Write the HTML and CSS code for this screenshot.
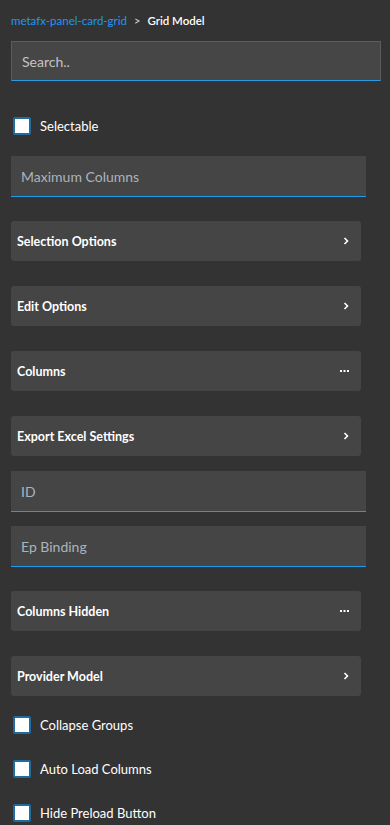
FILE: index.html
```html
<!DOCTYPE html>
<html>
<head>
<meta charset="utf-8">
<link rel="stylesheet" href="styles.css">
</head>
<body>
<div class="panel">
  <div class="crumbs"><span class="crumb-link">metafx-panel-card-grid</span><span class="crumb-sep">&gt;</span><span class="crumb-cur">Grid Model</span></div>
  <div class="search"><span class="search-ph">Search..</span></div>

  <label class="check gap-sel"><span class="box"></span><span class="check-label">Selectable</span></label>

  <div class="field f-max"><span class="field-ph">Maximum Columns</span></div>

  <div class="card c-first"><span class="card-label">Selection Options</span><svg class="chev" width="6" height="8" viewBox="0 0 6 8"><path d="M1.5 1 L4.5 4 L1.5 7" fill="none" stroke="#fff" stroke-width="1.6"/></svg></div>
  <div class="card"><span class="card-label">Edit Options</span><svg class="chev" width="6" height="8" viewBox="0 0 6 8"><path d="M1.5 1 L4.5 4 L1.5 7" fill="none" stroke="#fff" stroke-width="1.6"/></svg></div>
  <div class="card"><span class="card-label">Columns</span><svg class="dots" width="10" height="3" viewBox="0 0 10 3"><rect x="0" y="0" width="2" height="2" fill="#fff"/><rect x="3.5" y="0" width="2" height="2" fill="#fff"/><rect x="7" y="0" width="2" height="2" fill="#fff"/></svg></div>
  <div class="card"><span class="card-label">Export Excel Settings</span><svg class="chev" width="6" height="8" viewBox="0 0 6 8"><path d="M1.5 1 L4.5 4 L1.5 7" fill="none" stroke="#fff" stroke-width="1.6"/></svg></div>

  <div class="field f-id"><span class="field-ph">ID</span></div>
  <div class="field f-ep"><span class="field-ph">Ep Binding</span></div>

  <div class="card c-after-field"><span class="card-label">Columns Hidden</span><svg class="dots" width="10" height="3" viewBox="0 0 10 3"><rect x="0" y="0" width="2" height="2" fill="#fff"/><rect x="3.5" y="0" width="2" height="2" fill="#fff"/><rect x="7" y="0" width="2" height="2" fill="#fff"/></svg></div>
  <div class="card"><span class="card-label">Provider Model</span><svg class="chev" width="6" height="8" viewBox="0 0 6 8"><path d="M1.5 1 L4.5 4 L1.5 7" fill="none" stroke="#fff" stroke-width="1.6"/></svg></div>

  <label class="check gap-c1"><span class="box"></span><span class="check-label">Collapse Groups</span></label>
  <label class="check gap-c2"><span class="box"></span><span class="check-label">Auto Load Columns</span></label>
  <label class="check gap-c2"><span class="box"></span><span class="check-label">Hide Preload Button</span></label>
</div>
</body>
</html>
```

FILE: styles.css
```css
html, body {
  margin: 0;
  padding: 0;
  background: #333333;
}
body {
  font-family: "Lato", "Noto Sans", sans-serif;
  color: #ffffff;
  overflow: hidden;
  height: 825px;
}
.panel {
  display: flex;
  flex-direction: column;
  align-items: flex-start;
  padding: 12px 9px 0 11px;
}
.crumbs {
  display: flex;
  align-items: center;
  height: 16px;
  font-size: 11.5px;
}
.crumb-link { color: #2196f3; }
.crumb-sep { color: #dddddd; margin: 0 7px 0 7px; font-size: 11px; }
.crumb-cur { color: #ffffff; font-weight: 600; }

.search {
  box-sizing: border-box;
  margin-top: 13px;
  width: 370px;
  height: 40px;
  background: #464646;
  border: 1px solid #5c5c5c;
  border-bottom: 1px solid #2a9ae2;
  display: flex;
  align-items: center;
  padding-left: 10px;
}
.search-ph { color: #c4c4c4; font-size: 14px; }

.check {
  display: flex;
  align-items: center;
  height: 18px;
  padding-left: 2px;
}
.gap-sel { margin-top: 36px; }
.gap-c1 { margin-top: 20px; }
.gap-c2 { margin-top: 26px; }
.box {
  box-sizing: border-box;
  width: 18px;
  height: 18px;
  background: #ffffff;
  border: 2px solid #1f6c9e;
  border-radius: 2px;
}
.check-label {
  margin-left: 9px;
  font-size: 13px;
  color: #ffffff;
}

.field {
  box-sizing: border-box;
  width: 355px;
  height: 41px;
  background: #454545;
  border-bottom: 1px solid #1e9be9;
  display: flex;
  align-items: center;
  padding-left: 10px;
}
.field-ph { color: #aab4bd; font-size: 14px; }
.f-max { margin-top: 21px; }
.f-id { margin-top: 15px; }
.f-ep { margin-top: 14px; }

.card {
  box-sizing: border-box;
  width: 350px;
  height: 40px;
  margin-top: 25px;
  background: #454545;
  border-radius: 3px;
  display: flex;
  align-items: center;
  justify-content: space-between;
  padding: 0 11px 0 6px;
}
.c-first { margin-top: 24px; }
.c-after-field { margin-top: 24px; }
.card-label {
  font-size: 12.5px;
  font-weight: 700;
  color: #ffffff;
}
.chev { display: block; margin-right: 1px; }
.dots { display: block; margin-top: 1px; }
```
